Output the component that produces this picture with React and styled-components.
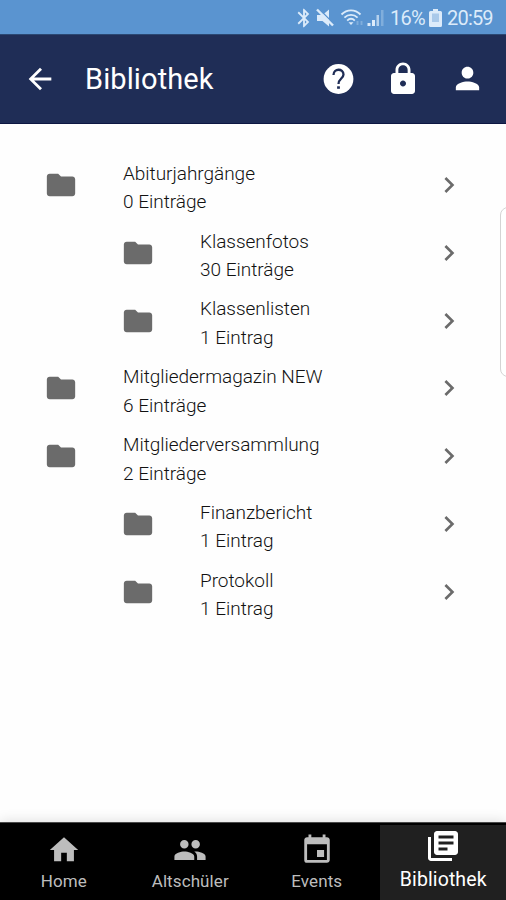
import React from 'react';
import styled, { createGlobalStyle } from 'styled-components';
import {
  MdArrowBack,
  MdBluetooth,
  MdChevronRight,
  MdEvent,
  MdFolder,
  MdHome,
  MdLibraryBooks,
  MdLock,
  MdPeople,
  MdPerson,
} from 'react-icons/md';

const GlobalStyle = createGlobalStyle`
  * {
    box-sizing: border-box;
  }

  body {
    margin: 0;
    font-family: Roboto, 'Liberation Sans', sans-serif;
    background: #fefefe;
  }

  svg {
    display: block;
    flex-shrink: 0;
  }
`;

const Screen = styled.div`
  position: relative;
  display: flex;
  flex-direction: column;
  width: 506px;
  height: 900px;
  overflow: hidden;
  background: #fefefe;
`;

const StatusBar = styled.div`
  display: flex;
  align-items: center;
  justify-content: flex-end;
  height: 34px;
  padding: 2px 12px 0 0;
  background: #5a94d0;
  color: #dcebfa;
`;

const StatusText = styled.span`
  width: ${({ $width }) => $width}px;
  font-size: 20px;
  line-height: 32px;
  letter-spacing: -0.8px;
  white-space: nowrap;
`;

const StatusIcons = styled.div`
  display: flex;
  align-items: center;
  margin-right: 5px;
`;

const BatterySlot = styled.div`
  margin-right: 5px;
`;

const Header = styled.header`
  display: flex;
  align-items: center;
  height: 90px;
  padding: 0 21px 0 23px;
  background: #1f2d56;
  border-top: 1px solid #2b4873;
  border-bottom: 1px solid #0d1742;
  color: #ffffff;
`;

const Title = styled.h1`
  flex: 1;
  margin: 0 0 0 28px;
  font-size: 29px;
  font-weight: 400;
  line-height: 40px;
  letter-spacing: 0.1px;
`;

const Actions = styled.div`
  display: flex;
  gap: 29px;
`;

const List = styled.ul`
  flex: 1;
  margin: 0;
  padding: 27px 0 0;
  list-style: none;
`;

const Row = styled.li`
  display: flex;
  align-items: center;
  height: 67.85px;
  padding: 0 41px 0 ${({ $nested }) => ($nested ? 121 : 44)}px;
  color: #6b6b6b;
`;

const Labels = styled.div`
  flex: 1;
  margin-left: 45px;
  padding-top: 6.5px;
  font-size: 19px;
  font-weight: 300;
  line-height: 28.4px;
  color: #111111;
`;

const Name = styled.div`
  letter-spacing: -0.03px;
`;

const Count = styled.div`
  letter-spacing: 0;
`;

const Handle = styled.div`
  position: absolute;
  top: 207px;
  right: -12px;
  width: 18px;
  height: 170px;
  border: 1px solid #d4d4d4;
  border-radius: 8px;
  background: #ffffff;
`;

const TabBar = styled.nav`
  display: flex;
  height: 78px;
  padding-top: 2px;
  background: #000000;
  box-shadow: 0 -1px 12px rgba(0, 0, 0, 0.13);
  border-top: 1px solid #4a4a4a;
`;

const Tab = styled.div`
  flex: 1;
  display: flex;
  flex-direction: column;
  align-items: center;
  padding: ${({ $active }) => ($active ? 3 : 8)}px 0 0 1px;
  background: ${({ $active }) => ($active ? '#202020' : 'transparent')};
  color: ${({ $active }) => ($active ? '#ffffff' : '#bdbdbd')};
  font-size: ${({ $active }) => ($active ? 19.5 : 17)}px;
  line-height: ${({ $active }) => ($active ? 32 : 28)}px;
  letter-spacing: 0.1px;
`;

const entries = [
  { name: 'Abiturjahrgänge', count: '0 Einträge' },
  { name: 'Klassenfotos', count: '30 Einträge', nested: true },
  { name: 'Klassenlisten', count: '1 Eintrag', nested: true },
  { name: 'Mitgliedermagazin NEW', count: '6 Einträge' },
  { name: 'Mitgliederversammlung', count: '2 Einträge' },
  { name: 'Finanzbericht', count: '1 Eintrag', nested: true },
  { name: 'Protokoll', count: '1 Eintrag', nested: true },
];

const tabs = [
  { label: 'Home', Icon: MdHome },
  { label: 'Altschüler', Icon: MdPeople },
  { label: 'Events', Icon: MdEvent },
  { label: 'Bibliothek', Icon: MdLibraryBooks, active: true },
];

function MuteIcon() {
  return (
    <svg width="21" height="20" viewBox="0 0 21 20">
      <path d="M2 7h5.500L14 1.500v17L7.500 13H2z" fill="currentColor" />
      <path d="M3.500 0.500L20 17" stroke="#5a94d0" strokeWidth="1.4" />
      <path d="M2 1.500L18 17.500" stroke="currentColor" strokeWidth="2.400" />
    </svg>
  );
}

function WifiIcon() {
  return (
    <svg width="31" height="20" viewBox="-5 0 31 20" fill="none" stroke="currentColor" strokeWidth="1.9">
      <path d="M0.500 6.500C6 1 14 1 19.500 6.500" />
      <path d="M3.400 9.600C7.300 6 12.700 6 16.600 9.600" />
      <path d="M6.200 12.600C8.600 10.400 11.400 10.400 13.800 12.600" />
      <path d="M7.500 14.200L10 17L12.500 14.200Z" fill="currentColor" stroke="none" />
      <path d="M16.500 13v4M20.500 13v4" strokeOpacity="0.3" />
    </svg>
  );
}

function SignalIcon() {
  return (
    <svg width="18" height="18" viewBox="0 0 18 18" fill="currentColor">
      <rect x="0.500" y="14" width="3" height="3" />
      <rect x="5" y="11" width="3" height="6" />
      <rect x="9.500" y="6" width="2.500" height="11" opacity="0.7" />
      <rect x="14" y="1" width="2.500" height="16" opacity="0.3" />
    </svg>
  );
}

function BatteryIcon() {
  return (
    <svg width="13" height="18" viewBox="0 0 13 18">
      <path d="M4 0h5v2h2.500q1.500 0 1.500 1.500v13q0 1.500-1.500 1.500h-10Q0 18 0 16.500v-13Q0 2 1.500 2H4z" fill="currentColor" />
      <path d="M3 4.500h7V13H3z" fill="#a9c9ea" />
    </svg>
  );
}

function HelpIcon() {
  return (
    <svg width="35" height="36" viewBox="0 0 35 36" fill="none">
      <circle cx="17.500" cy="18" r="14.900" fill="currentColor" />
      <path
        d="M12.500 13.900C12.500 6.900 22.500 7.300 22.500 13.400C22.500 17.400 17.500 17.800 17.500 22.900"
        stroke="#1f2d56"
        strokeWidth="2.300"
      />
      <rect x="16.100" y="25.300" width="2.800" height="2.500" fill="#1f2d56" />
    </svg>
  );
}

export default function App() {
  return (
    <>
      <GlobalStyle />
      <Screen>
        <StatusBar>
          <StatusIcons>
            <MdBluetooth size={22} />
            <MuteIcon />
            <WifiIcon />
            <SignalIcon />
          </StatusIcons>
          <StatusText $width={39}>16%</StatusText>
          <BatterySlot>
            <BatteryIcon />
          </BatterySlot>
          <StatusText $width={47}>20:59</StatusText>
        </StatusBar>
        <Header>
          <MdArrowBack size={34} />
          <Title>Bibliothek</Title>
          <Actions>
            <HelpIcon />
            <MdLock size={36} />
            <MdPerson size={35} />
          </Actions>
        </Header>
        <List>
          {entries.map(({ name, count, nested }) => (
            <Row key={name} $nested={nested}>
              <MdFolder size={34} />
              <Labels>
                <Name>{name}</Name>
                <Count>{count}</Count>
              </Labels>
              <MdChevronRight size={32} />
            </Row>
          ))}
        </List>
        <Handle />
        <TabBar>
          {tabs.map(({ label, Icon, active }) => (
            <Tab key={label} $active={active}>
              <Icon size={active ? 36 : 34} />
              {label}
            </Tab>
          ))}
        </TabBar>
      </Screen>
    </>
  );
}
